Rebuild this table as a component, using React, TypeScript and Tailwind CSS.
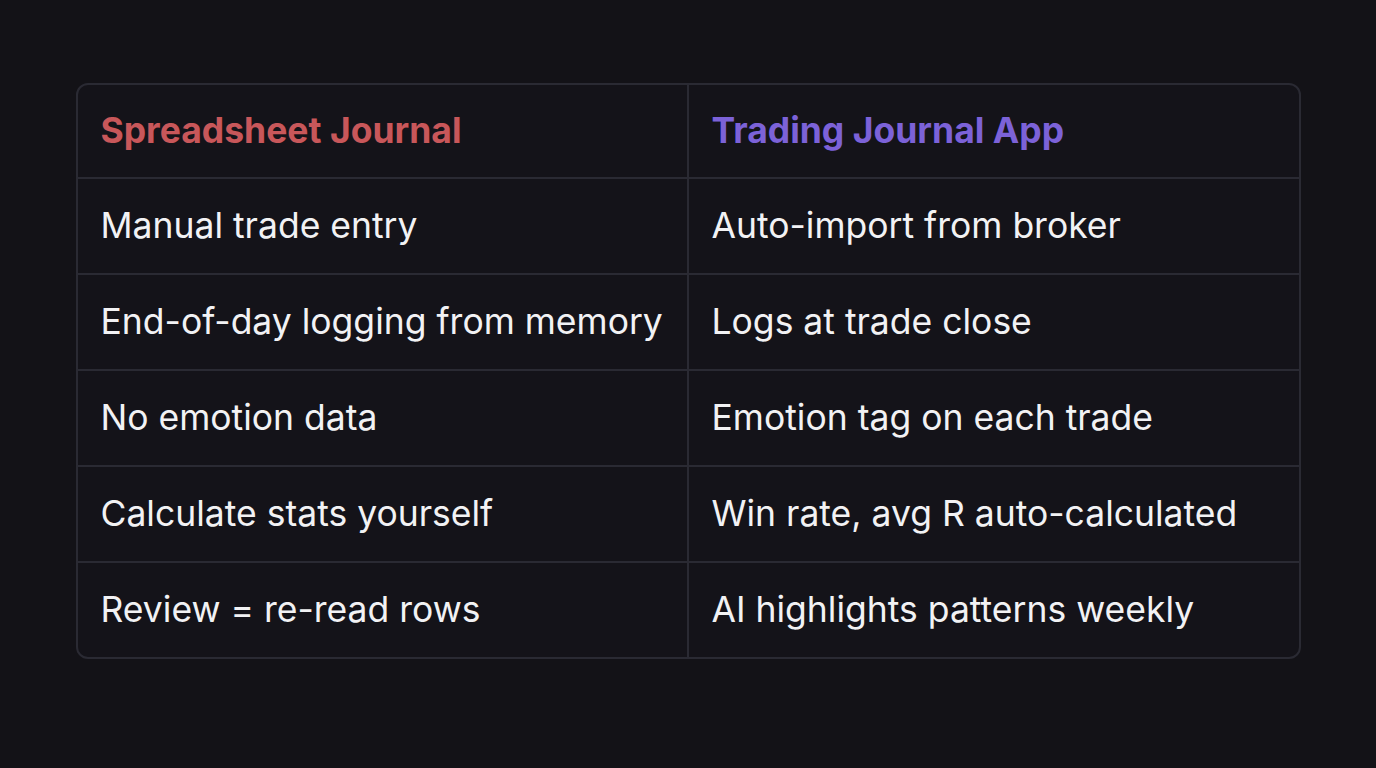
import * as React from 'react';

const rows: [string, string][] = [
  ['Manual trade entry', 'Auto-import from broker'],
  ['End-of-day logging from memory', 'Logs at trade close'],
  ['No emotion data', 'Emotion tag on each trade'],
  ['Calculate stats yourself', 'Win rate, avg R auto-calculated'],
  ['Review = re-read rows', 'AI highlights patterns weekly'],
];

export default function App() {
  return (
    <div className="w-[1376px] h-[768px] bg-[#131217] flex items-start justify-center pt-[83px] font-['Inter',sans-serif]">
      <div className="w-[1225px] rounded-[12px] border-2 border-[#2a2a33] bg-[#141319] overflow-hidden">
        <div className="grid grid-cols-[611px_1fr] h-[92px]">
          <div className="flex items-center pl-[23px] border-r-2 border-[#2a2a33] text-[35.5px] font-bold text-[#c8575a]">
            Spreadsheet Journal
          </div>
          <div className="flex items-center pl-[23px] text-[35.5px] font-bold text-[#7c62d8]">
            Trading Journal App
          </div>
        </div>
        {rows.map(([left, right], i) => (
          <div key={i} className="grid grid-cols-[611px_1fr] h-[96px] border-t-2 border-[#2a2a33]">
            <div className="flex items-center pl-[23px] border-r-2 border-[#2a2a33] text-[35.5px] text-[#f2f2f4]">
              {left}
            </div>
            <div className="flex items-center pl-[23px] text-[35.5px] text-[#f2f2f4]">
              {right}
            </div>
          </div>
        ))}
      </div>
    </div>
  );
}
